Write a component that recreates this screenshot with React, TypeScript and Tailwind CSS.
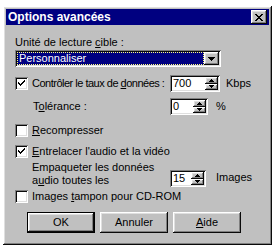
import React from "react";

const raised =
  "shadow-[inset_-1px_-1px_#0a0a0a,inset_1px_1px_#ffffff,inset_-2px_-2px_#808080,inset_2px_2px_#dfdfdf]";
const sunken =
  "shadow-[inset_1px_1px_#808080,inset_-1px_-1px_#ffffff,inset_2px_2px_#0a0a0a,inset_-2px_-2px_#dfdfdf]";

const Check = ({ checked }: { checked?: boolean }) => (
  <div className={`w-[13px] h-[13px] bg-white shrink-0 flex items-center justify-center ${sunken}`}>
    {checked && (
      <svg width="7" height="7" viewBox="0 0 7 7">
        <path d="M0 2h1v1h1v1h1V3h1V2h1V1h1V0h1v2H6v1H5v1H4v1H3v1H2V5H1V4H0z" fill="#000" />
      </svg>
    )}
  </div>
);

const Arrow = ({ up }: { up?: boolean }) => (
  <svg width="5" height="3" viewBox="0 0 5 3">
    <path d={up ? "M2 0h1v1h1v1h1v1H0V2h1V1h1z" : "M0 0h5v1H4v1H3v1H2V2H1V1H0z"} fill="#000" />
  </svg>
);

const Spin = ({ value, w }: { value: string; w: string }) => (
  <div className={`${w} h-[17px] shrink-0 bg-white flex items-stretch p-[2px] ${sunken}`}>
    <span className="flex-1 pl-[1px] leading-[13px]">{value}</span>
    <div className="w-[13px] flex flex-col">
      <div className={`flex-1 bg-[#c0c0c0] flex items-center justify-center ${raised}`}>
        <Arrow up />
      </div>
      <div className={`flex-1 bg-[#c0c0c0] flex items-center justify-center ${raised}`}>
        <Arrow />
      </div>
    </div>
  </div>
);

const Btn = ({ children, def }: { children: React.ReactNode; def?: boolean }) => (
  <div
    className={`w-[68px] h-[21px] bg-[#c0c0c0] flex items-center justify-center ${
      def ? "border border-black" : ""
    }`}
  >
    <div className={`w-full h-full flex items-center justify-center ${raised}`}>{children}</div>
  </div>
);

const App = () => {
  return (
    <div className="w-[276px] h-[248px] bg-white pt-[6px] pl-[3px] font-['Liberation_Sans',Arial,sans-serif] text-[11px] text-black whitespace-nowrap">
      <div className={`w-[269px] h-[239px] bg-[#c0c0c0] p-[3px] ${raised}`}>
        <div className="h-[16px] bg-[#000080] flex items-center justify-between pl-[2px] pr-[2px]">
          <span className="text-white font-bold text-[12px] leading-[16px]">Options avancées</span>
          <div className={`w-[16px] h-[14px] bg-[#c0c0c0] flex items-center justify-center ${raised}`}>
            <svg width="8" height="7" viewBox="0 0 8 7">
              <path d="M0 0h2v1h1v1h2V1h1V0h2v1H7v1H6v1H5v1h1v1h1v1h1v1H6V6H5V5H3v1H2v1H0V6h1V5h1V4h1V3H2V2H1V1H0z" fill="#000" />
            </svg>
          </div>
        </div>

        <div className="pl-[9px]">
          <div className="mt-[11px] leading-[13px]">
            Unité de lecture <u>c</u>ible :
          </div>
          <div className={`mt-[1px] w-[206px] h-[17px] bg-white flex items-stretch p-[2px] ${sunken}`}>
            <div className="flex-1 bg-[#000080] text-white border border-dotted border-[#ffff80] leading-[11px] pl-[1px]">
              Personnaliser
            </div>
            <div className={`w-[15px] bg-[#c0c0c0] flex items-center justify-center ${raised}`}>
              <svg width="7" height="4" viewBox="0 0 7 4">
                <path d="M0 0h7v1H6v1H5v1H4v1H3V3H2V2H1V1H0z" fill="#000" />
              </svg>
            </div>
          </div>

          <div className="mt-[8px] flex items-center h-[17px]">
            <div className="w-[155px] flex items-center gap-[4px]">
              <Check checked />
              <span className="tracking-[-0.5px]">
                Contrôler le taux de <u>d</u>onnées :
              </span>
            </div>
            <Spin value="700" w="w-[50px]" />
            <span className="ml-[6px]">Kbps</span>
          </div>

          <div className="mt-[6px] flex items-center h-[17px]">
            <div className="w-[155px] pl-[18px]">
              T<u>o</u>lérance :
            </div>
            <Spin value="0" w="w-[38px]" />
            <span className="ml-[8px]">%</span>
          </div>

          <div className="mt-[9px] flex items-center gap-[4px] h-[13px]">
            <Check />
            <span>
              <u>R</u>ecompresser
            </span>
          </div>

          <div className="mt-[8px] flex items-center gap-[4px] h-[13px]">
            <Check checked />
            <span>
              <u>E</u>ntrelacer l'audio et la vidéo
            </span>
          </div>

          <div className="mt-[3px] flex items-end">
            <div className="w-[155px] pl-[17px] leading-[13px]">
              Empaqueter les données
              <br />a<u>u</u>dio toutes les
            </div>
            <Spin value="15" w="w-[36px]" />
            <span className="ml-[10px] mb-[2px]">Images</span>
          </div>

          <div className="mt-[3px] flex items-center gap-[4px] h-[13px]">
            <Check />
            <span>
              Images <u>t</u>ampon pour CD-ROM
            </span>
          </div>

          <div className="mt-[9px] ml-[12px] flex gap-[5px]">
            <Btn def>OK</Btn>
            <Btn>Annuler</Btn>
            <Btn>
              <span>
                <u>A</u>ide
              </span>
            </Btn>
          </div>
        </div>
      </div>
    </div>
  );
};

export default App;
